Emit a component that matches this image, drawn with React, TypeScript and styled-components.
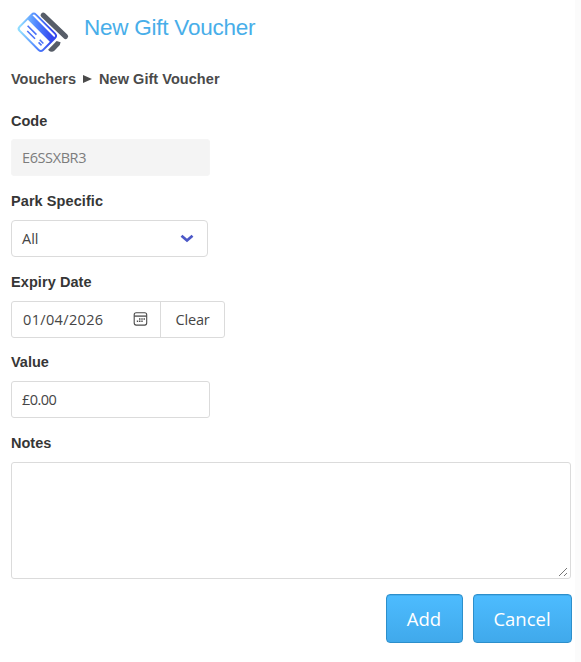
import React from "react";
import styled, { createGlobalStyle } from "styled-components";

const GlobalStyle = createGlobalStyle`
  * { box-sizing: border-box; }
  body { margin: 0; background: #fff; }
  button, input, textarea { font: inherit; margin: 0; }
`;

const Page = styled.main`
  height: 662px;
  width: 581px;
  padding: 10px 4px 0 11px;
  border-right: 6px solid #fbfbfb;
  background: #fff;
  font-family: "Liberation Sans", Arial, sans-serif;
  color: #363636;
`;

const Header = styled.header`
  display: flex;
  height: 46px;
  gap: 14px;
  padding-left: 5px;
`;

const Title = styled.h1`
  margin: 0;
  font-size: 22.5px;
  line-height: 36px;
  font-weight: 400;
  letter-spacing: -0.24px;
  color: #48aee9;
`;

const Breadcrumb = styled.nav`
  display: flex;
  align-items: center;
  height: 46px;
  font-size: 14.5px;
  font-weight: 700;
  color: #4a4a4a;
  white-space: nowrap;

  svg { margin: 0 7px 0 7px; }
`;

const Crumb = styled.span<{ $spacing: number }>`
  letter-spacing: ${(p) => p.$spacing}px;
`;

const Field = styled.section<{ $tall?: boolean }>`
  display: flex;
  flex-direction: column;
  align-items: flex-start;
  height: ${(p) => (p.$tall ? "auto" : "80.6px")};
`;

const Label = styled.label<{ $spacing?: number }>`
  height: 37.4px;
  padding-top: 0.6px;
  line-height: 37px;
  font-size: 14.5px;
  font-weight: 700;
  letter-spacing: ${(p) => p.$spacing ?? 0}px;
`;

const TextInput = styled.input<{ $spacing: number }>`
  width: 199px;
  height: 37px;
  padding: 0 10px;
  border: 1px solid #dbdbdb;
  border-radius: 3px;
  background: #fff;
  color: #454545;
  font-family: "Open Sans", "Noto Sans", sans-serif;
  font-size: 14.5px;
  letter-spacing: ${(p) => p.$spacing}px;
  outline: none;

  &:disabled {
    border-color: #f5f5f5;
    background: #f4f4f4;
    color: #7c7c7c;
  }
`;

const Select = styled.button`
  display: flex;
  align-items: center;
  justify-content: space-between;
  width: 197px;
  height: 37px;
  padding: 0 13px 0 10px;
  border: 1px solid #dbdbdb;
  border-radius: 4px;
  background: #fff;
  color: #454545;
  font-family: "Open Sans", "Noto Sans", sans-serif;
  font-size: 14.5px;
`;

const DateGroup = styled.div`
  display: flex;
  width: 214px;
  height: 37px;
  border: 1px solid #dbdbdb;
  border-radius: 3px;
  color: #454545;
  font-family: "Open Sans", "Noto Sans", sans-serif;
  font-size: 14.5px;
`;

const DateValue = styled.div`
  display: flex;
  align-items: center;
  justify-content: space-between;
  width: 149px;
  padding: 0 12px 0 11px;
  border-right: 1px solid #dbdbdb;
  letter-spacing: 0.35px;
`;

const ClearButton = styled.button`
  flex: 1;
  padding: 0;
  border: 0;
  background: transparent;
  color: inherit;
  letter-spacing: -0.15px;
`;

const Notes = styled.div`
  display: flex;
  align-items: flex-end;
  justify-content: flex-end;
  width: 560.4px;
  height: 117px;
  padding: 1px;
  border: 1px solid #dbdbdb;
  border-radius: 3px;
`;

const Actions = styled.footer`
  display: flex;
  justify-content: flex-end;
  gap: 10px;
  width: 560.5px;
  margin-top: 15px;
`;

const ActionButton = styled.button<{ $width: number }>`
  width: ${(p) => p.$width}px;
  height: 49px;
  padding: 0;
  border: 1px solid #2d8fcb;
  border-radius: 4px;
  background: linear-gradient(#4dbcff, #40a9eb);
  box-shadow: inset 0 1px 0 #43adee;
  color: #fff;
  font-family: "Open Sans", "Noto Sans", sans-serif;
  font-size: 18.5px;
`;

function VoucherIcon() {
  return (
    <svg width="54" height="46" viewBox="16 10 54 46" fill="none" aria-hidden="true">
      <defs>
        <linearGradient id="card" gradientUnits="userSpaceOnUse" x1="-12" y1="12" x2="10" y2="-10">
          <stop stopColor="#8fdcff" />
          <stop offset="0.5" stopColor="#5289ff" />
          <stop offset="1" stopColor="#3448ee" />
        </linearGradient>
      </defs>
      <path d="M43.2 15.2 65.5 36.4" stroke="#575d68" strokeWidth="5.2" strokeLinecap="round" />
      <path d="m48.6 49.2 8-8.2 4 1.3-.8 2.8-5.2 5.4q-3 2.4-6-.1Z" fill="#575d68" />
      <g transform="translate(37.3 32.3) rotate(45)">
        <rect x="-18.1" y="-13.2" width="36.2" height="26.4" rx="4.6" fill="#fff" />
        <rect x="-17.5" y="-12.5" width="35" height="25" rx="4" fill="url(#card)" />
        <path d="M-13.9-10.7h27.6q1.8 0 1.8 2.1h-31q0-2.1 1.6-2.1Z" fill="#fff" />
        <path d="M-15.5-2.2h31v10.5q0 2.2-2.2 2.2h-26.6q-2.2 0-2.2-2.2Z" fill="#fff" />
        <path d="M-11.5 2.2H1M-8 6.2H3M7 3.6h5.2M8 6.2h4.2" stroke="#4a72f8" strokeWidth="1.6" />
      </g>
    </svg>
  );
}

function CalendarIcon() {
  return (
    <svg width="15" height="14" viewBox="0 0 15 14" fill="none" stroke="#4b4b4b" aria-hidden="true">
      <rect x="1.2" y="0.8" width="12.5" height="12.3" rx="2" strokeWidth="1.1" />
      <path d="M1.2 4.1h12.5" strokeWidth="1.3" />
      <path d="M6 7h1.5M8.3 7h1.4M10.5 7H12M3.8 9.3h1.4M6 9.3h1.5M8.3 9.3h1.4" strokeWidth="1.4" />
    </svg>
  );
}

export default function App() {
  return (
    <>
      <GlobalStyle />
      <Page>
        <Header>
          <VoucherIcon />
          <Title>New Gift Voucher</Title>
        </Header>
        <Breadcrumb>
          <Crumb $spacing={0}>Vouchers</Crumb>
          <svg width="9" height="10" viewBox="0 0 9 10" aria-hidden="true">
            <path d="M0 1v8l9-4Z" fill="#4a4a4a" />
          </svg>
          <Crumb $spacing={0.05}>New Gift Voucher</Crumb>
        </Breadcrumb>
        <Field>
          <Label htmlFor="code">Code</Label>
          <TextInput id="code" $spacing={-0.4} value="E6SSXBR3" disabled readOnly />
        </Field>
        <Field>
          <Label $spacing={0.08}>Park Specific</Label>
          <Select>
            All
            <svg width="14" height="10" viewBox="0 0 14 10" fill="none" aria-hidden="true">
              <path d="m1.5 2.8 5.5 4.7 5.5-4.7" stroke="#4c58c7" strokeWidth="2.8" />
            </svg>
          </Select>
        </Field>
        <Field>
          <Label $spacing={0.08}>Expiry Date</Label>
          <DateGroup>
            <DateValue>
              01/04/2026
              <CalendarIcon />
            </DateValue>
            <ClearButton>Clear</ClearButton>
          </DateGroup>
        </Field>
        <Field>
          <Label htmlFor="value">Value</Label>
          <TextInput id="value" $spacing={-0.55} value="£0.00" readOnly />
        </Field>
        <Field $tall>
          <Label>Notes</Label>
          <Notes>
            <svg width="12" height="12" viewBox="0 0 12 12" stroke="#777" aria-hidden="true">
              <path d="m2 11 8-8M7 11l3-3" />
            </svg>
          </Notes>
        </Field>
        <Actions>
          <ActionButton $width={77}>Add</ActionButton>
          <ActionButton $width={99}>Cancel</ActionButton>
        </Actions>
      </Page>
    </>
  );
}
